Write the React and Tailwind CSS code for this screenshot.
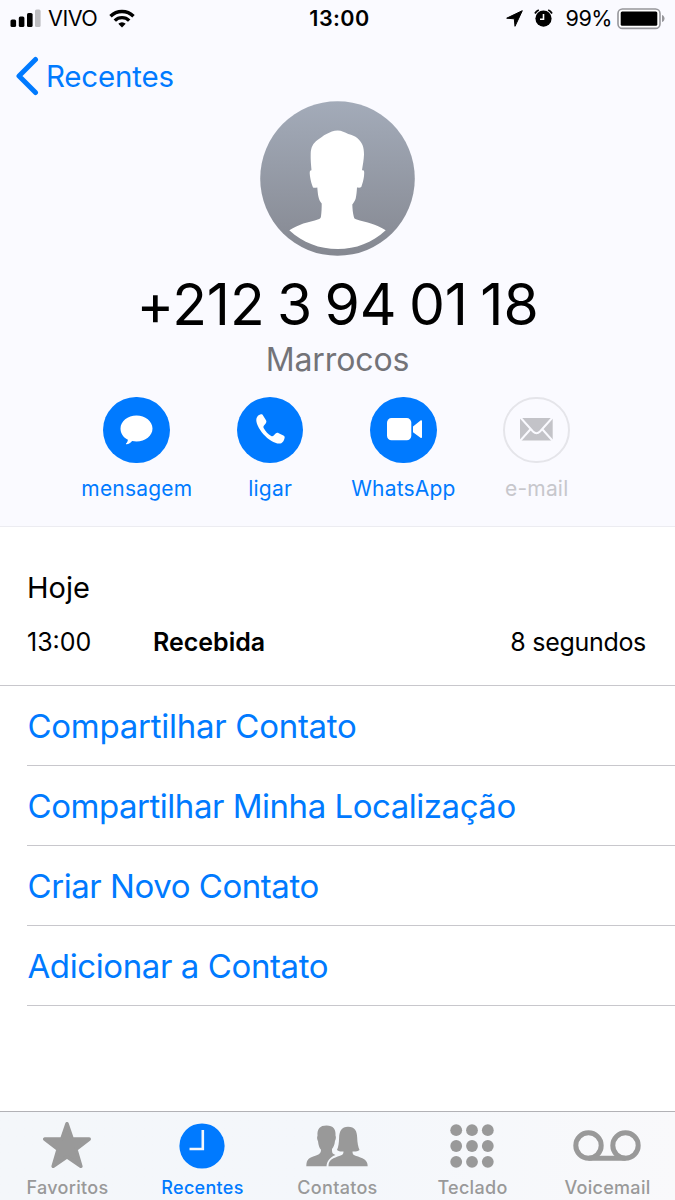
import clsx from "clsx";

const StatusBar = () => (
  <div className="grid h-[38px] grid-cols-3 items-center px-[10px] text-[21.6px] leading-none">
    <div className="flex items-center">
      <svg className="mb-[2px]" width="31" height="19" viewBox="0 0 31 19">
        <rect x="0.5" y="10.5" width="5.6" height="7.5" rx="1.6" />
        <rect x="8.8" y="7.5" width="5.6" height="10.5" rx="1.6" />
        <rect x="17" y="4" width="5.6" height="14" rx="1.6" />
        <rect x="25" y="0.5" width="5.6" height="17.5" rx="1.6" fill="#bdbdc1" />
      </svg>
      <span className="ml-[7px] tracking-[-0.5px]">VIVO</span>
      <svg className="mb-[2px] ml-[12px]" width="26" height="19" viewBox="0 0 26 19">
        <g fill="none" stroke="#000" strokeWidth="3.4">
          <path d="M1.5 7.3a16.3 16.3 0 0 1 23 0" />
          <path d="M5.8 11.6a10.2 10.2 0 0 1 14.4 0" />
        </g>
        <path d="M9.3 14.8a5.3 5.3 0 0 1 7.4 0L13 18.6z" />
      </svg>
    </div>
    <span className="pl-[4px] text-center font-semibold tracking-[0.4px]">13:00</span>
    <div className="flex items-center justify-end">
      <svg className="mb-[1px]" width="17" height="17" viewBox="0 0 17 17">
        <path d="M16.3 0.7 0.7 8.2l7.6.6.7 7.5z" stroke="#000" strokeLinejoin="round" />
      </svg>
      <svg className="mb-[2px] ml-[11px]" width="19" height="18" viewBox="0 0 19 18">
        <circle cx="9.5" cy="9.6" r="8.1" />
        <path d="M1 4.5C1.8 3 3 1.8 4.8 1M18 4.5C17.2 3 16 1.8 14.2 1" fill="none" stroke="#000" strokeWidth="1.8" />
        <path d="M9.5 5v5.2H6" fill="none" stroke="#fff" strokeWidth="1.6" />
      </svg>
      <span className="ml-[12px] tracking-[-0.5px]">99%</span>
      <svg className="ml-[5px] shrink-0" width="48" height="22" viewBox="0 0 48 22">
        <rect x="1" y="1" width="42" height="19.4" rx="4.5" fill="#fff" stroke="#96969b" strokeWidth="1.6" />
        <rect x="3.7" y="3.6" width="36.6" height="14.2" rx="1.5" />
        <path d="M45 7c3.4 1 3.4 6 0 7z" fill="#96969b" />
      </svg>
    </div>
  </div>
);

const Avatar = () => (
  <svg width="155" height="155" viewBox="0 0 155 155">
    <defs>
      <linearGradient id="avatar" x1="0" y1="0" x2="0" y2="1">
        <stop offset="0" stopColor="#a3abb9" />
        <stop offset="1" stopColor="#858891" />
      </linearGradient>
    </defs>
    <circle cx="77.5" cy="77.5" r="77.3" fill="url(#avatar)" />
    <path
      fill="#fff"
      d="M77.7 29.6C81.5 29.6 85 31.5 88.3 33 92 34 95 35 97.5 37.3 102.5 42 104 46 104 53.5 103.8 59 102.8 64 102 69.3 104.3 69 104.5 70 104 75.3 103.5 79 102.5 82.5 101.3 86 100 87 98.5 86.6 97 86.6 96.8 90 96.5 94 95.7 97.6 95 100 93.5 102 92.3 103.6 92.5 108 92.8 112 93.7 115.3 94 117 94.3 117.8 96 118.3 101 120 106.5 121 111.7 122.8 116.5 124.5 121 126.5 125.7 129.3 112 142 96 148 77.7 148S43 142 29.3 129.3C34 126.5 38.5 124.4 43.3 122.6 48.5 121 53.5 120 58.5 118.3 60.5 117.5 60.8 116.7 61 115.3 61.6 111 61.7 107 61.7 102.6 60 100.5 59 98.5 58.5 96 57.8 93 57.6 90 57.3 86.6 55.5 86.8 54 86.9 53 86.6 51.5 83 50.5 79 50 75.3 49.5 71 49.5 69 51.5 69.3 51 64 50.5 58 50.7 52.6 51 46 53 42.5 57.5 39 60.5 37 63 34.7 66.5 33 70 31.3 73.5 29.7 77.7 29.6z"
    />
  </svg>
);

const ChatIcon = () => (
  <svg className="shrink-0" width="67" height="67" viewBox="0 0 67 67" fill="#fff">
    <path d="M33.5 19.5c8.8 0 16 5.7 16 13s-7.2 13-16 13c-1.5 0-3-.2-4.4-.5-1.4 1.8-3.3 3.2-5.6 3.3-.6 0-.7-.6-.3-1 .9-.8 1.600-2 1.700-3.600-4.700-2.300-7.400-6.500-7.400-11.200 0-7.300 7.200-13 16-13z" />
  </svg>
);

const PhoneIcon = () => (
  <svg className="shrink-0" width="67" height="67" viewBox="0 0 67 67" fill="#fff">
    <path d="M23.3 18.5C24.7 18.1 25.5 18.5 26.2 19.7L29 24.3C29.6 25.5 29.5 26.4 28.7 27.4L27 29.4C26.3 30.3 26.2 31 26.8 32.2 28.5 35.5 31.2 38.2 34.2 40 35.2 40.6 35.9 40.4 36.7 39.6L38.6 37.6C39.5 36.7 40.6 36.6 41.7 37.2L46.4 39.5C47.5 40.1 47.9 40.8 47.6 42 47 44.3 46 46.3 44.3 47.3 41.5 48.3 37.5 46.8 34.5 45 28.5 41.2 23.5 35.6 20.8 29.7 19.6 27 18.9 24.5 19.5 22.3 20.2 20.3 21.5 19 23.3 18.5z" />
  </svg>
);

const VideoIcon = () => (
  <svg className="shrink-0" width="67" height="67" viewBox="0 0 67 67" fill="#fff">
    <rect x="17" y="22.1" width="24.3" height="22.2" rx="4.5" />
    <path d="M43 30.5 50.5 24.6c.9-.7 1.5-.4 1.5.7v15.700c0 1.100-.6 1.400-1.500.7L43 36.300z" />
  </svg>
);

const MailIcon = () => (
  <svg className="shrink-0" width="67" height="67" viewBox="0 0 67 67" fill="#c3c3c8">
    <rect x="17" y="22" width="32.7" height="22.5" />
    <path
      d="M16.5 20.5 30 35.5c2.5 2.5 4.5 2.5 7 0l13.5-15M16.5 45.5l11.200-12.500M50.300 45.500l-11.200-12.500"
      fill="none"
      stroke="#fafaff"
      strokeWidth="2"
    />
  </svg>
);

const actions = [
  { label: "mensagem", Icon: ChatIcon },
  { label: "ligar", Icon: PhoneIcon },
  { label: "WhatsApp", Icon: VideoIcon },
  { label: "e-mail", Icon: MailIcon, disabled: true },
];

const links = [
  { label: "Compartilhar Contato", tracking: "tracking-[-0.27px]" },
  { label: "Compartilhar Minha Localização", tracking: "tracking-[-0.47px]" },
  { label: "Criar Novo Contato", tracking: "tracking-[-0.45px]" },
  { label: "Adicionar a Contato", tracking: "tracking-[-0.4px]" },
];

const StarIcon = () => (
  <svg width="50" height="48" viewBox="0 0 50 48" fill="currentColor">
    <path
      d="M25 1.800 30.200 17H47.200L33.900 27.400 38.800 44.200 25 34.800 11.200 44.200 16.100 27.400 2.800 17H19.800z"
      stroke="currentColor"
      strokeWidth="3.600"
      strokeLinejoin="round"
    />
  </svg>
);

const ClockIcon = () => (
  <svg width="46" height="46" viewBox="0 0 46 46">
    <circle cx="23" cy="23" r="22.600" fill="currentColor" />
    <path d="M23.800 7v19H10.500" fill="none" stroke="#f4f7fb" strokeWidth="2.600" />
  </svg>
);

const PeopleIcon = () => (
  <svg width="62" height="42" viewBox="0 0 62 42" fill="currentColor">
    <path d="M20.500.5c7 0 9.500 4 9 10 .7 1.500.5 3.500-.5 5.500-.5 4-1.500 6-3 8 0 3 0 4.500 2 5.300l1.500.7c-5 2-8.500 5.500-9 11.200H.3c0-7 3-8.400 9-10.400 4-1.400 5.700-2.400 5.700-6-1.800-2-2.500-4.500-3-8.500-1-2-1.200-4-.5-5.500-.5-7 2.500-10.300 9-10.300z" />
    <path d="M42 1.700c7 0 9 4.300 9.200 11 .1 5 1 9 2.300 12.300-2 1.500-4.500 1.800-7 1.500 0 2.500.5 3.200 3 4.200 7 2.500 12.200 3.300 12.200 10.500H22.500c0-7.200 5-8 11.500-10.500 2.800-1 3.500-1.700 3.500-4.200-2.500.3-4.500 0-6.500-1.500 1.500-3.300 2-7.300 2.100-12.300.3-6.700 2.500-11 8.900-11z" />
  </svg>
);

const KeypadIcon = () => (
  <svg width="44" height="44" viewBox="0 0 44 44" fill="currentColor">
    {[6.2, 22, 37.8].map((y) =>
      [6.2, 22, 37.8].map((x) => <circle key={`${x}-${y}`} cx={x} cy={y} r="5.900" />)
    )}
  </svg>
);

const VoicemailIcon = () => (
  <svg width="68" height="32" viewBox="0 0 68 32" fill="none" stroke="currentColor" strokeWidth="5">
    <circle cx="15.500" cy="15.500" r="12.700" />
    <circle cx="52.500" cy="15.500" r="12.700" />
    <path d="M15.500 28.200h37" />
  </svg>
);

const tabs = [
  { label: "Favoritos", Icon: StarIcon },
  { label: "Recentes", Icon: ClockIcon, active: true },
  { label: "Contatos", Icon: PeopleIcon },
  { label: "Teclado", Icon: KeypadIcon },
  { label: "Voicemail", Icon: VoicemailIcon },
];

const App = () => {
  return (
    <div className="flex h-[1200px] w-[675px] flex-col bg-white font-['Inter',sans-serif] text-black">
      {/* Contact header */}
      <header className="h-[527px] border-b border-[#ececf1] bg-[#fafaff]">
        <StatusBar />

        <button className="flex h-[62.5px] items-start pl-[15px] pt-[18px] text-[#007aff]">
          <svg width="24" height="40" viewBox="0 0 24 40" fill="none" stroke="currentColor" strokeWidth="5">
            <path d="M20.5 3.5 4 20l16.5 16.5" strokeLinecap="round" strokeLinejoin="round" />
          </svg>
          <span className="ml-[7px] mt-[1px] text-[29.5px] leading-[38px] tracking-[-0.2px]">
            Recentes
          </span>
        </button>

        <div className="flex flex-col items-center">
          <Avatar />
          <h1 className="mt-[14.5px] whitespace-pre text-[57px] leading-[70px] tracking-[-0.1px] [word-spacing:-3.5px]">
            +212 3 94 01 18
          </h1>
          <p className="text-[32px] leading-[40px] tracking-[-0.1px] text-[#737378]">Marrocos</p>
        </div>

        <div className="mt-[16.5px] flex pl-[70.2px]">
          {actions.map(({ label, Icon, disabled }) => (
            <button
              key={label}
              className={clsx(
                "flex w-[133.3px] flex-col items-center",
                disabled ? "text-[#c7c7cc]" : "text-[#007aff]"
              )}
            >
              <span
                className={clsx(
                  "flex size-[66.7px] items-center justify-center rounded-full",
                  disabled ? "border-2 border-[#e5e5ea]" : "bg-[#007aff]"
                )}
              >
                <Icon />
              </span>
              <span className="mt-[11.5px] text-[21px] leading-[28px] tracking-[0.2px]">{label}</span>
            </button>
          ))}
        </div>
      </header>

      {/* Call log */}
      <section className="h-[159px] border-b border-[#c8c7cc] pl-[27px] pr-[29px] pt-[42px]">
        <h2 className="text-[29px] leading-[38px]">Hoje</h2>
        <div className="mt-[18px] flex text-[25px] leading-[34px]">
          <span className="w-[126px]">13:00</span>
          <span className="font-semibold">Recebida</span>
          <span className="ml-auto tracking-[-0.3px]">8 segundos</span>
        </div>
      </section>

      {/* Contact options */}
      <ul className="flex-1 pl-[27px] text-[#007aff]">
        {links.map(({ label, tracking }) => (
          <li key={label} className="flex h-[80px] items-center border-b border-[#c8c7cc]">
            <button className={clsx("pl-[0.5px] text-[33px] leading-[44px]", tracking)}>{label}</button>
          </li>
        ))}
      </ul>

      {/* Tab bar */}
      <nav className="flex h-[89px] border-t border-[#b2b2b6] bg-linear-to-r from-[#f4f7fa] via-[#f4f7fb] to-[#f9f9fb]">
        {tabs.map(({ label, Icon, active }) => (
          <button
            key={label}
            className={clsx(
              "flex w-[135px] flex-col items-center pt-[10px]",
              active ? "text-[#007aff]" : "text-[#999999]"
            )}
          >
            <span className="mr-[1px] flex h-[48px] items-center">
              <Icon />
            </span>
            <span className="mt-[6px] text-[18px] font-medium leading-[24px] tracking-[0.3px]">{label}</span>
          </button>
        ))}
      </nav>
    </div>
  );
};

export default App;
